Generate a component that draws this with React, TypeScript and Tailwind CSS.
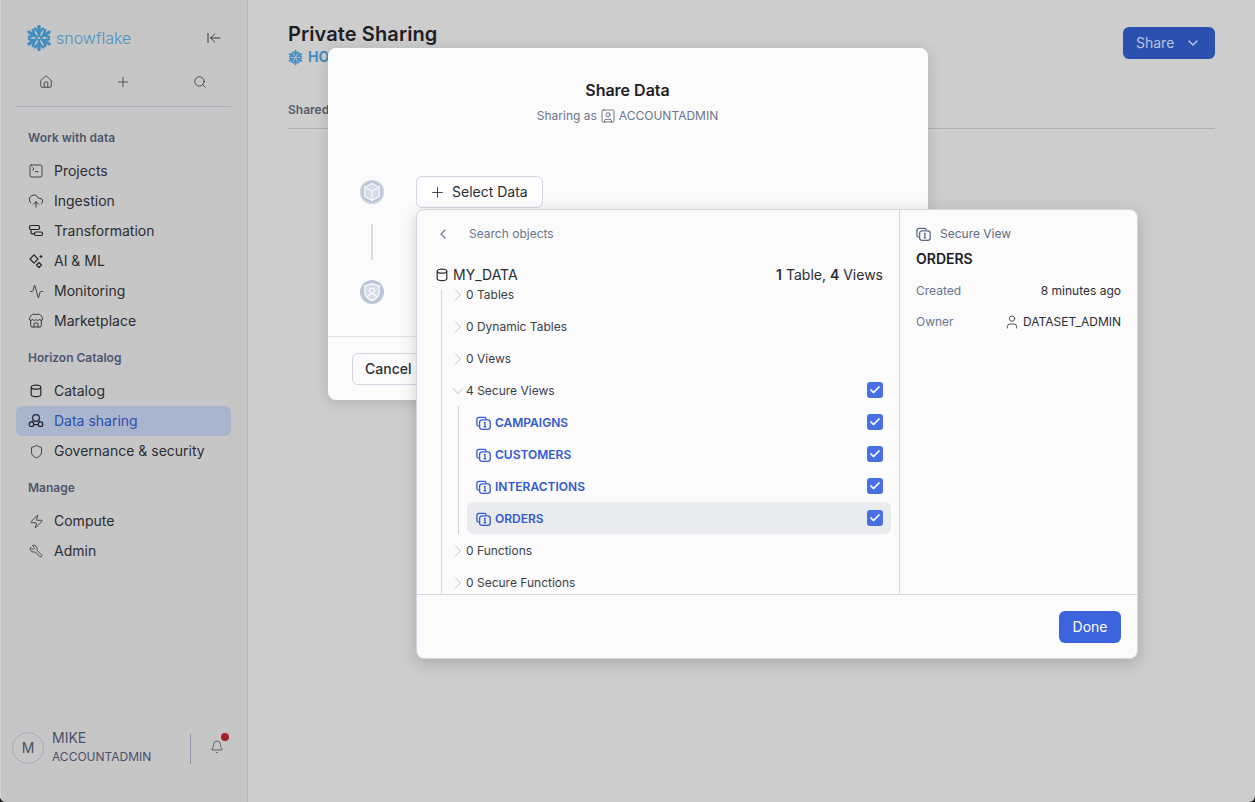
import React from 'react';
import {
  Activity,
  ArrowLeftToLine,
  Bell,
  Check,
  ChevronDown,
  ChevronLeft,
  ChevronRight,
  CloudUpload,
  House,
  Plus,
  Search,
  Shield,
  SquareTerminal,
  SquareUser,
  Store,
  User,
  Wrench,
  Zap,
} from 'lucide-react';

const font = { fontFamily: 'Inter, "Liberation Sans", sans-serif' };

const Snowflake = ({ size, color }: { size: number; color: string }) => (
  <svg width={size} height={size} viewBox="0 0 24 24" fill="none" stroke={color} strokeLinecap="round">
    {[0, 60, 120, 180, 240, 300].map((a) => (
      <g key={a} transform={`rotate(${a} 12 12)`}>
        <path d="M12 1.2V8" strokeWidth="3" />
        <path d="M8.4 3.4 12 7.2l3.6-3.8" strokeWidth="2.4" />
      </g>
    ))}
    <path d="M12 9.6 14.4 12 12 14.4 9.6 12Z" strokeWidth="1.4" />
  </svg>
);

const DbIcon = ({ size }: { size: number }) => (
  <svg width={size} height={size} viewBox="0 0 14 14" fill="none" stroke="currentColor" strokeWidth="1.2">
    <ellipse cx="7" cy="3.2" rx="4.8" ry="2" />
    <path d="M2.2 3.2v7.4c0 1.2 2.1 2.1 4.8 2.1s4.8-.9 4.8-2.1V3.2" />
  </svg>
);

const TransformIcon = () => (
  <svg width="16" height="16" viewBox="0 0 16 16" fill="none" stroke="currentColor" strokeWidth="1.2">
    <rect x="1.5" y="2.5" width="10" height="4" rx="1.5" />
    <rect x="6.5" y="9" width="8" height="3.5" rx="1.5" />
    <path d="M3 6.5v3.5a1 1 0 0 0 1 .8h2.5" />
  </svg>
);

const SparkIcon = () => (
  <svg width="16" height="16" viewBox="0 0 16 16" fill="none" stroke="currentColor" strokeWidth="1.2" strokeLinejoin="round">
    <path d="M6 1.8 10 6 6 10.2 2 6Z" />
    <path d="M11 9.5 13.5 12 11 14.5 8.5 12Z" />
    <path d="M13 2v3M11.5 3.5h3" />
  </svg>
);

const ShareIcon = () => (
  <svg width="16" height="16" viewBox="0 0 16 16" fill="none" stroke="currentColor" strokeWidth="1.2">
    <circle cx="8" cy="5" r="3.4" />
    <circle cx="3.5" cy="11.2" r="2.3" />
    <circle cx="12.5" cy="11.2" r="2.3" />
    <path d="M5.8 11.6h4.4M5.2 7.5 4 9M10.8 7.5 12 9" />
  </svg>
);

const SecureViewIcon = ({ className }: { className: string }) => (
  <svg width="15" height="15" viewBox="0 0 15 15" fill="none" stroke="currentColor" strokeWidth="1.3" className={className}>
    <path d="M2.8 10.2A2 2 0 0 1 .9 8.2V3.4a2 2 0 0 1 2-2h5.4a2 2 0 0 1 2 1.8" />
    <rect x="3.6" y="3.9" width="10.6" height="9.4" rx="2.4" />
    <circle cx="8.9" cy="6.8" r="1" fill="currentColor" stroke="none" />
    <path d="M8.9 7.4v3.4M7.6 10.8h2.6" />
  </svg>
);

const CubeBadge = () => (
  <div className="w-6 h-6 rounded-full bg-[#bcc4d8] flex items-center justify-center">
    <svg width="24" height="24" viewBox="0 0 24 24" fill="none" stroke="#fbfbfc" strokeWidth="1.1" strokeLinejoin="round">
      <circle cx="12" cy="12" r="11.2" stroke="#d4d9e6" />
      <path d="M12 3.4 19.4 7.2v9.4L12 20.6 4.6 16.6V7.2Z" fill="#d7dce8" />
      <path d="M4.6 7.2 12 11.2l7.4-4M12 11.2v9.4" />
    </svg>
  </div>
);

const RoleBadge = () => (
  <div className="w-6 h-6 rounded-full bg-[#bcc4d8] flex items-center justify-center">
    <svg width="24" height="24" viewBox="0 0 24 24" fill="none" stroke="#fbfbfc" strokeWidth="1.2">
      <path d="M12 3.6 19.2 6v6.4c0 4.2-3.4 6.6-7.2 8.2-3.8-1.6-7.2-4-7.2-8.2V6Z" fill="#d7dce8" />
      <circle cx="12" cy="10.5" r="2.5" />
      <path d="M7.4 17.6c.6-2.4 2.4-3.4 4.6-3.4s4 1 4.6 3.4" />
    </svg>
  </div>
);

const Checkbox = () => (
  <span className="w-4 h-4 rounded-[3px] bg-[#4a6fe3] flex items-center justify-center">
    <Check size={12} strokeWidth={3.5} className="text-white" />
  </span>
);

const NavItem = ({ icon, label, active }: { icon: React.ReactNode; label: string; active?: boolean }) => (
  <div className={`h-[30px] rounded-md flex items-center pl-3 gap-2.5 text-sm ${active ? 'bg-[#a9b5cd] text-[#2d4fae]' : 'text-[#2b2d33]'}`}>
    <span className="w-4 h-4 flex items-center justify-center text-[#24262c]">{icon}</span>
    <span>{label}</span>
  </div>
);

const NavHeading = ({ label }: { label: string }) => (
  <div className="h-[33px] pl-3 pt-[7px] text-xs leading-4 font-semibold text-[#4f566e]">{label}</div>
);

const TreeRow = ({ label, open, first }: { label: string; open?: boolean; first?: boolean }) => (
  <div className={`h-8 flex items-center ${first ? '-mt-[11px]' : ''}`}>
    <span className="w-5 ml-[6px] flex justify-center text-[#a9adb9] shrink-0">
      {open ? <ChevronDown size={20} strokeWidth={0.9} /> : <ChevronRight size={20} strokeWidth={0.9} />}
    </span>
    <span className="-ml-[2px] text-xs text-[#3c3f48]">{label}</span>
    {open && (
      <span className="ml-auto mr-4 -mt-[2px] flex">
        <Checkbox />
      </span>
    )}
  </div>
);

const ViewRow = ({ label, selected }: { label: string; selected?: boolean }) => (
  <div className={`h-8 ml-[8px] mr-2 pl-[9px] pr-2 rounded-md flex items-center ${selected ? 'bg-[#e9ebef]' : ''}`}>
    <SecureViewIcon className="text-[#3359d0] shrink-0 mt-[2px]" />
    <span className="ml-[4px] mt-[2px] text-xs font-semibold text-[#3359d0]">{label}</span>
    <span className="ml-auto flex">
      <Checkbox />
    </span>
  </div>
);

export default function App() {
  return (
    <div className="relative w-[1255px] h-[802px] overflow-hidden bg-[#1a1a1a]" style={font}>
      <div className="w-full h-full flex bg-[#cdcdcd] rounded-bl-md rounded-br-md overflow-hidden">
        {/* Sidebar */}
        <aside className="w-[248px] shrink-0 h-full bg-[#c6c6c6] border-r border-l border-r-[#b2b3b9] border-l-[#d4d4d4] flex flex-col">
          <div className="h-[68px] pl-[25px] pr-[25px] pt-[25px] flex items-start justify-between">
            <div className="flex items-center gap-[4px]">
              <Snowflake size={26} color="#418dc1" />
              <span className="text-base leading-[26px] font-light text-[#4f92c2]">snowflake</span>
            </div>
            <ArrowLeftToLine size={16} strokeWidth={1.3} className="mt-[5px] text-[#24262c]" />
          </div>
          <div className="h-[39px] ml-[15px] mr-[16px] pl-[23px] pr-[24px] pt-[7px] flex items-start justify-between text-[#33353c] border-b border-[#a9abbb]">
            <House size={14} strokeWidth={1.4} />
            <Plus size={16} strokeWidth={1.2} className="-mt-[1px]" />
            <Search size={14} strokeWidth={1.4} />
          </div>
          <div className="ml-[15px] mr-[16px] mt-4">
            <NavHeading label="Work with data" />
            <NavItem icon={<SquareTerminal size={16} strokeWidth={1.2} />} label="Projects" />
            <NavItem icon={<CloudUpload size={16} strokeWidth={1.3} />} label="Ingestion" />
            <NavItem icon={<TransformIcon />} label="Transformation" />
            <NavItem icon={<SparkIcon />} label="AI & ML" />
            <NavItem icon={<Activity size={15} strokeWidth={1.3} />} label="Monitoring" />
            <NavItem icon={<Store size={16} strokeWidth={1.3} />} label="Marketplace" />
            <div className="h-[7px]" />
            <NavHeading label="Horizon Catalog" />
            <NavItem icon={<DbIcon size={14} />} label="Catalog" />
            <NavItem icon={<ShareIcon />} label="Data sharing" active />
            <NavItem icon={<Shield size={15} strokeWidth={1.3} />} label="Governance & security" />
            <div className="h-[7px]" />
            <NavHeading label="Manage" />
            <NavItem icon={<Zap size={15} strokeWidth={1.3} />} label="Compute" />
            <NavItem icon={<Wrench size={14} strokeWidth={1.3} className="-scale-x-100" />} label="Admin" />
          </div>
          <div className="mt-auto h-[70px] pl-[11px] flex items-start">
            <div className="w-8 h-8 rounded-full border border-[#a9adc0] flex items-center justify-center text-sm text-[#4a5068]">M</div>
            <div className="ml-2 -mt-[4px] text-[#4a5068]">
              <div className="text-sm leading-[20px]">MIKE</div>
              <div className="text-xs leading-[18px] font-normal">ACCOUNTADMIN</div>
            </div>
            <div className="ml-[39px] mt-[2px] w-px h-[30px] bg-[#8f94a8]" />
            <div className="relative ml-[19px] mt-[8px] text-[#33353c]">
              <Bell size={14} strokeWidth={1.2} />
              <span className="absolute -top-[7px] left-[11px] w-2 h-2 rounded-full bg-[#a12126]" />
            </div>
          </div>
        </aside>

        {/* Main */}
        <main className="flex-1 pl-10 pr-10 pt-[20px]">
          <div className="flex items-start justify-between">
            <div>
              <h1 className="text-xl leading-7 font-semibold text-[#1e2025] tracking-[0.1px]">Private Sharing</h1>
              <div className="flex items-center gap-[5px] h-5 -mt-[1px]">
                <Snowflake size={15} color="#418dc1" />
                <span className="text-sm font-bold text-[#418dc1]">HOL_SHARE</span>
              </div>
            </div>
            <button className="mt-[7px] h-8 w-[92px] rounded-md bg-[#2c50b0] text-[#b9c4de] text-sm flex items-center pl-[13px] gap-[11px]">
              Share
              <ChevronDown size={16} strokeWidth={2.2} />
            </button>
          </div>
          <div className="mt-[30px] h-[32px] border-b border-[#aeaebb] text-xs font-semibold text-[#555b6e] flex items-start pt-[5px]">Shared</div>
        </main>
      </div>

      {/* Share Data dialog */}
      <div className="absolute left-[328px] top-[48px] w-[600px] h-[352px] rounded-lg bg-[#fbfbfc] shadow-[0_2px_14px_rgba(0,0,0,0.14)] flex flex-col">
        <h2 className="mt-[31px] text-center text-base leading-[22px] font-semibold text-[#1e2025] -ml-px">Share Data</h2>
        <div className="mt-[7px] flex items-center justify-center text-xs leading-4 text-[#6b7690] -ml-px">
          Sharing as
          <SquareUser size={16} strokeWidth={1.2} className="mx-[3px] text-[#4f566e]" />
          ACCOUNTADMIN
        </div>
        <div className="mt-[52px] pl-[32px] flex items-center gap-[32px]">
          <CubeBadge />
          <button className="w-[127px] h-8 rounded-md border border-[#d2d6e3] bg-white flex items-center pl-3 gap-[6px] text-sm text-[#2b2d33]">
            <Plus size={17} strokeWidth={1.2} />
            Select Data
          </button>
        </div>
        <div className="ml-[43px] mt-[16px] w-[2px] h-[36px] bg-[#d7dbe6]" />
        <div className="mt-[20px] ml-[32px]">
          <RoleBadge />
        </div>
        <div className="mt-[32px] border-t border-[#dfe2ea] pt-4 pl-6">
          <button className="w-[72px] h-8 rounded-md border border-[#d2d6e3] text-sm font-medium text-[#2b2d33] text-left pl-3">Cancel</button>
        </div>
      </div>

      {/* Object picker */}
      <div className="absolute left-[416px] top-[209px] w-[722px] h-[450px] rounded-lg bg-[#fbfbfc] border border-[#d2d6e3] shadow-[0_4px_16px_rgba(0,0,0,0.18)] flex flex-col overflow-hidden">
        <div className="flex h-[385px] border-b border-[#d2d6e3]">
          <div className="w-[483px] border-r border-[#d2d6e3] overflow-hidden">
            <div className="h-12 pl-[18px] flex items-center text-[#6b7690] text-xs">
              <ChevronLeft size={16} strokeWidth={1.8} className="text-[#6b7690]" />
              <span className="ml-[18px]">Search objects</span>
            </div>
            <div className="h-[24px] mt-[5px] pl-[18px] pr-4 flex items-center text-sm text-[#2b2d33]">
              <DbIcon size={14} />
              <span className="ml-[4px]">MY_DATA</span>
              <span className="ml-auto">
                <b className="font-semibold">1</b> Table, <b className="font-semibold">4</b> Views
              </span>
            </div>
            <div className="ml-[24px] mt-[3px] border-l border-[#d2d6e3] flex flex-col">
              <TreeRow label="0 Tables" first />
              <TreeRow label="0 Dynamic Tables" />
              <TreeRow label="0 Views" />
              <TreeRow label="4 Secure Views" open />
              <div className="ml-[16px] -mt-px mb-px border-l border-[#d2d6e3]">
                <ViewRow label="CAMPAIGNS" />
                <ViewRow label="CUSTOMERS" />
                <ViewRow label="INTERACTIONS" />
                <ViewRow label="ORDERS" selected />
              </div>
              <TreeRow label="0 Functions" />
              <TreeRow label="0 Secure Functions" />
            </div>
          </div>
          <div className="flex-1 px-4 pt-4">
            <div className="flex items-center h-4 text-xs text-[#5d6b85]">
              <SecureViewIcon className="text-[#5d6b85] shrink-0" />
              <span className="ml-[9px]">Secure View</span>
            </div>
            <div className="mt-[7px] text-sm leading-5 font-semibold text-[#1e2025]">ORDERS</div>
            <div className="mt-[14px] flex justify-between items-center h-4 text-xs">
              <span className="text-[#6b7690]">Created</span>
              <span className="text-[#2b2d33]">8 minutes ago</span>
            </div>
            <div className="mt-[15px] flex justify-between items-center h-4 text-xs">
              <span className="text-[#6b7690]">Owner</span>
              <span className="flex items-center gap-[3px] text-[#2b2d33]">
                <User size={16} strokeWidth={1.2} />
                DATASET_ADMIN
              </span>
            </div>
          </div>
        </div>
        <div className="flex-1 flex justify-end items-start pt-4 pr-4">
          <button className="w-[62px] h-8 rounded-md bg-[#3a63dc] text-white text-sm">Done</button>
        </div>
      </div>
    </div>
  );
}
